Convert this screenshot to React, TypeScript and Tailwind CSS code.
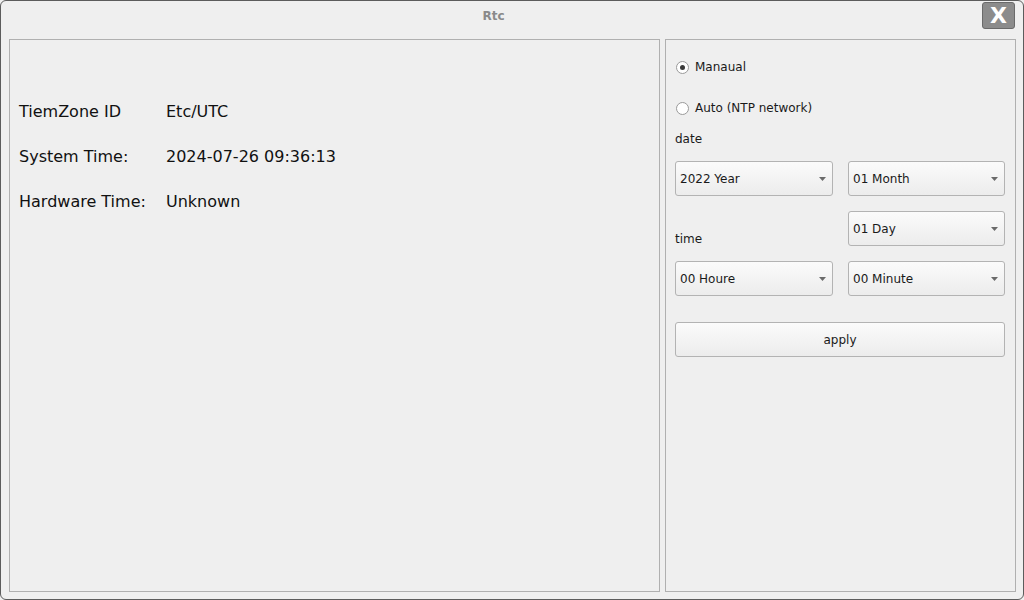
import React from 'react';

const font = { fontFamily: '"DejaVu Sans", sans-serif' };

function Radio({ checked, label }: { checked?: boolean; label: string }) {
  return (
    <div className="flex items-center h-[16px]">
      <span className="w-[13px] h-[13px] rounded-full border border-[#9a9a9a] bg-white flex items-center justify-center">
        {checked && <span className="w-[5px] h-[5px] rounded-full bg-[#3a3a3a]" />}
      </span>
      <span className="ml-[6px] text-[12px] text-[#1a1a1a]">{label}</span>
    </div>
  );
}

function Combo({ value }: { value: string }) {
  return (
    <div className="h-[35px] rounded-[3px] border border-[#b3b3b3] bg-gradient-to-b from-[#fbfbfb] to-[#ececec] flex items-center justify-between pl-[4px] pr-[6px]">
      <span className="text-[12px] text-[#1a1a1a]">{value}</span>
      <svg width="7" height="4" viewBox="0 0 7 4">
        <path d="M0 0 L7 0 L3.5 4 Z" fill="#6a6a6a" />
      </svg>
    </div>
  );
}

const rows = [
  { label: 'TiemZone ID', value: 'Etc/UTC' },
  { label: 'System Time:', value: '2024-07-26 09:36:13' },
  { label: 'Hardware Time:', value: 'Unknown' },
];

export default function App() {
  return (
    <div style={font} className="w-[1024px] h-[600px] bg-[#efefef]">
      <div className="w-full h-full rounded-[6px] border border-[#5c5c5c] bg-[#efefef] flex flex-col">
        {/* title bar */}
        <div className="h-[38px] flex items-start">
          <div className="flex-1 text-center pt-[6px] pl-[4px] text-[12px] font-bold text-[#8a8a8a]">Rtc</div>
          <button className="mt-[1px] mr-[8px] w-[33px] h-[27px] rounded-[3px] border border-[#6a6a6a] bg-[#8c8c8c] flex items-center justify-center text-white font-bold text-[22px] leading-none">
            X
          </button>
        </div>

        <div className="flex-1 flex pl-[8px] pr-[7px] pb-[7px] gap-[5px]">
          {/* left panel */}
          <div className="w-[651px] border border-[#b0b0b0] pt-[62px] pl-[9px]">
            <div className="flex flex-col gap-[26px] text-[16px] text-[#111]">
              {rows.map(r => (
                <div key={r.label} className="flex h-[19px] items-center">
                  <span className="w-[147px]">{r.label}</span>
                  <span>{r.value}</span>
                </div>
              ))}
            </div>
          </div>

          {/* right panel */}
          <div className="flex-1 border border-[#b0b0b0] pl-[9px] pr-[9px]">
            <div className="pt-[19px] pl-[1px]">
              <Radio checked label="Manaual" />
            </div>
            <div className="pt-[25px] pl-[1px]">
              <Radio label="Auto (NTP network)" />
            </div>
            <div className="pt-[16px] h-[38px] text-[12px] text-[#1a1a1a] leading-[15px]">date</div>
            <div className="grid grid-cols-[158px_157px] gap-x-[15px] gap-y-[15px] pt-[7px]">
              <Combo value="2022 Year" />
              <Combo value="01 Month" />
              <div className="flex items-end text-[12px] text-[#1a1a1a] leading-[13px]">time</div>
              <Combo value="01 Day" />
              <Combo value="00 Houre" />
              <Combo value="00 Minute" />
            </div>
            <button className="mt-[26px] w-[330px] h-[35px] rounded-[3px] border border-[#b3b3b3] bg-gradient-to-b from-[#fbfbfb] to-[#ececec] text-[12px] text-[#1a1a1a]">
              apply
            </button>
          </div>
        </div>
      </div>
    </div>
  );
}
